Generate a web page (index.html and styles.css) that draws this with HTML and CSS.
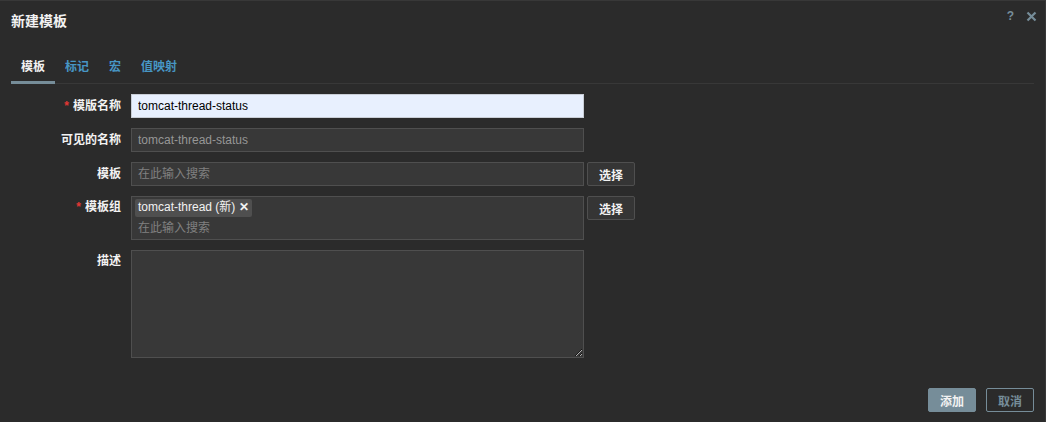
FILE: index.html
```html
<!DOCTYPE html>
<html lang="zh">
<head>
<meta charset="utf-8">
<title>新建模板</title>
<link rel="stylesheet" href="styles.css">
</head>
<body>
<div class="dialog">
  <div class="header">
    <h4 class="title">新建模板</h4>
    <div class="header-icons">
      <span class="help">?</span>
      <svg class="close" width="11" height="11" viewBox="0 0 11 11"><path d="M1.5 1.5 L9.5 9.5 M9.5 1.5 L1.5 9.5" stroke="#768d99" stroke-width="2.2" fill="none"/></svg>
    </div>
  </div>
  <ul class="tabs">
    <li class="tab active">模板</li>
    <li class="tab">标记</li>
    <li class="tab">宏</li>
    <li class="tab">值映射</li>
  </ul>
  <div class="form">
    <div class="label"><span class="req">*</span>模版名称</div>
    <div class="field"><input class="input autofill" type="text" value="tomcat-thread-status"></div>

    <div class="label">可见的名称</div>
    <div class="field"><input class="input" type="text" placeholder="tomcat-thread-status"></div>

    <div class="label">模板</div>
    <div class="field">
      <div class="input ms single"><span class="ph">在此输入搜索</span></div>
      <button class="btn-alt">选择</button>
    </div>

    <div class="label top"><span class="req">*</span>模板组</div>
    <div class="field top">
      <div class="input ms multi">
        <span class="chip">tomcat-thread (新) <span class="chip-x">✕</span></span>
        <span class="ph">在此输入搜索</span>
      </div>
      <button class="btn-alt">选择</button>
    </div>

    <div class="label top">描述</div>
    <div class="field top"><textarea class="input area"></textarea></div>
  </div>
  <div class="footer">
    <button class="btn-primary">添加</button>
    <button class="btn-cancel">取消</button>
  </div>
</div>
</body>
</html>
```
FILE: styles.css
```css
* { box-sizing: border-box; }
html, body { margin: 0; padding: 0; background: #2b2b2b; }
body {
  font-family: Arial, "Liberation Sans", "Noto Sans CJK SC", sans-serif;
  font-size: 12px;
  color: #f2f2f2;
}
.dialog {
  width: 1046px;
  height: 422px;
  background: #2b2b2b;
  border-top: 1px solid #383838;
  border-right: 1px solid #383838;
  padding: 0 11px 10px 11px;
  display: flex;
  flex-direction: column;
}
.header {
  height: 52px;
  display: flex;
  justify-content: space-between;
  align-items: flex-start;
  padding-top: 11px;
}
.title {
  margin: 0;
  font-size: 14px;
  line-height: 18px;
  font-weight: bold;
  color: #f2f2f2;
}
.header-icons {
  display: flex;
  align-items: center;
  gap: 12px;
  margin-top: -3px;
  margin-right: -3px;
}
.help {
  color: #768d99;
  font-weight: bold;
  font-size: 12px;
  line-height: 14px;
}
.close { display: block; }
.tabs {
  list-style: none;
  margin: 0;
  padding: 0;
  display: flex;
  border-bottom: 1px solid #383838;
}
.tab {
  padding: 7px 10px;
  line-height: 14px;
  font-weight: bold;
  color: #4796c4;
  border-bottom: 3px solid transparent;
  margin-bottom: -1px;
}
.tab.active {
  color: #f2f2f2;
  border-bottom-color: #768d99;
}
.form {
  margin-top: 10px;
  display: grid;
  grid-template-columns: 110px 1fr;
  column-gap: 10px;
  row-gap: 10px;
}
.label {
  text-align: right;
  font-weight: bold;
  line-height: 24px;
  color: #f2f2f2;
}
.label.top { line-height: 22px; }
.req { color: #e33734; margin-right: 4px; }
.field {
  display: flex;
  align-items: flex-start;
  gap: 3px;
}
.input {
  width: 453px;
  height: 24px;
  margin: 0;
  padding: 0 6px;
  border: 1px solid #4f4f4f;
  background: #383838;
  color: #f2f2f2;
  font-family: Arial, "Liberation Sans", "Noto Sans CJK SC", sans-serif;
  font-size: 12px;
  outline: none;
  border-radius: 0;
}
.input::placeholder { color: #969696; }
.input.autofill {
  background: #e8f0fe;
  border-color: #c9ced6;
  color: #000;
}
.ms { display: flex; flex-direction: column; }
.ph { color: #808080; line-height: 22px; }
.multi {
  height: 44px;
  padding: 2px 3px 0 3px;
}
.multi .ph { line-height: 18px; padding-left: 3px; margin-top: 2px; }
.chip {
  align-self: flex-start;
  background: #4f4f4f;
  color: #f2f2f2;
  border-radius: 2px;
  padding: 0 3px 0 3px;
  line-height: 17px;
  height: 18px;
}
.chip-x { font-weight: bold; font-size: 12px; }
.area {
  height: 108px;
  resize: vertical;
  padding: 4px 6px;
}
.btn-alt {
  width: 48px;
  height: 24px;
  padding: 0;
  border: 1px solid #4f4f4f;
  border-radius: 2px;
  background: #353535;
  color: #f2f2f2;
  font-family: Arial, "Liberation Sans", "Noto Sans CJK SC", sans-serif;
  font-size: 12px;
  font-weight: bold;
}
.footer {
  margin-top: auto;
  display: flex;
  justify-content: flex-end;
  gap: 10px;
}
.btn-primary, .btn-cancel {
  width: 48px;
  height: 24px;
  padding: 0;
  border-radius: 2px;
  font-family: Arial, "Liberation Sans", "Noto Sans CJK SC", sans-serif;
  font-size: 12px;
  font-weight: bold;
}
.btn-primary {
  background: #768d99;
  border: 1px solid #768d99;
  color: #f2f2f2;
}
.btn-cancel {
  background: transparent;
  border: 1px solid #768d99;
  color: #768d99;
}
```
